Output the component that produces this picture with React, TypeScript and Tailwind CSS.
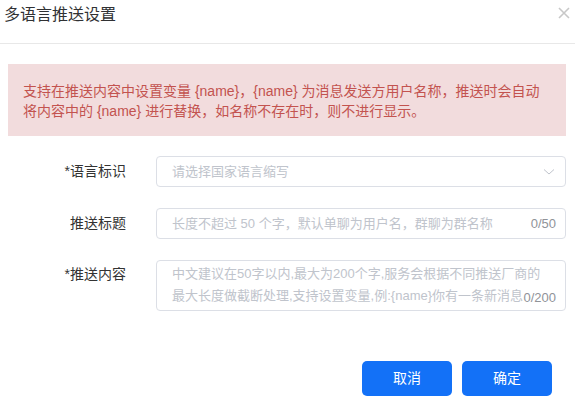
export default function App() {
  return (
    <div className="w-[575px] h-[407px] bg-white font-['Liberation_Sans','Noto_Sans_CJK_SC',sans-serif] text-[#333] overflow-hidden">
      <div className="h-[44px] border-b border-[#e8e8e8] flex items-start justify-between pl-[4px] pr-[5px]">
        <h1 className="text-[16px] leading-[24px] mt-[3px] text-[#303133]">多语言推送设置</h1>
        <svg className="mt-[7px]" width="12" height="12" viewBox="0 0 12 12">
          <path d="M1 1 L11 11 M11 1 L1 11" stroke="#c8c8c8" strokeWidth="1.6" />
        </svg>
      </div>

      <div className="mt-[20px] mx-[8px] w-[558px] h-[72px] bg-[#f2dcdd] pl-[15px] pr-[10px] pt-[17px] text-[14px] leading-[20px] text-[#c3534f]">
        支持在推送内容中设置变量 {"{name}"}，{"{name}"} 为消息发送方用户名称，推送时会自动
        <br />
        将内容中的 {"{name}"} 进行替换，如名称不存在时，则不进行显示。
      </div>

      <div className="mt-[20px] flex flex-col gap-[21px] text-[14px]">
        <div className="flex items-center">
          <label className="w-[126px] text-right">*语言标识</label>
          <div className="ml-[30px] w-[410px] h-[31px] border border-[#dcdfe6] rounded-[4px] flex items-center justify-between pl-[15px] pr-[10px]">
            <span className="text-[#c0c4cc] text-[13px]">请选择国家语言缩写</span>
            <svg width="12" height="8" viewBox="0 0 12 8">
              <path d="M1 1.5 L6 6 L11 1.5" fill="none" stroke="#c0c4cc" strokeWidth="1" />
            </svg>
          </div>
        </div>

        <div className="flex items-center">
          <label className="w-[126px] text-right">推送标题</label>
          <div className="ml-[30px] w-[410px] h-[31px] border border-[#dcdfe6] rounded-[4px] flex items-center justify-between pl-[15px] pr-[9px]">
            <span className="text-[#c0c4cc] text-[13px]">长度不超过 50 个字，默认单聊为用户名，群聊为群名称</span>
            <span className="text-[#909399] text-[13px]">0/50</span>
          </div>
        </div>

        <div className="flex items-start">
          <label className="w-[126px] text-right mt-[4px]">*推送内容</label>
          <div className="ml-[30px] w-[410px] h-[51px] border border-[#dcdfe6] rounded-[4px] relative pl-[15px] pt-[2px] text-[13px] leading-[22px] text-[#c0c4cc] whitespace-nowrap">
            中文建议在50字以内,最大为200个字,服务会根据不同推送厂商的
            <br />
            最大长度做截断处理,支持设置变量,例:{"{name}"}你有一条新消息
            <span className="absolute right-[9px] bottom-[4px] text-[#909399] text-[13px] leading-[16px]">0/200</span>
          </div>
        </div>
      </div>

      <div className="mt-[50px] flex justify-end gap-[10px] pr-[23px]">
        <button className="w-[90px] h-[35px] rounded-[5px] bg-[#1371f7] text-white text-[14px]">取消</button>
        <button className="w-[90px] h-[35px] rounded-[5px] bg-[#1371f7] text-white text-[14px]">确定</button>
      </div>
    </div>
  );
}
